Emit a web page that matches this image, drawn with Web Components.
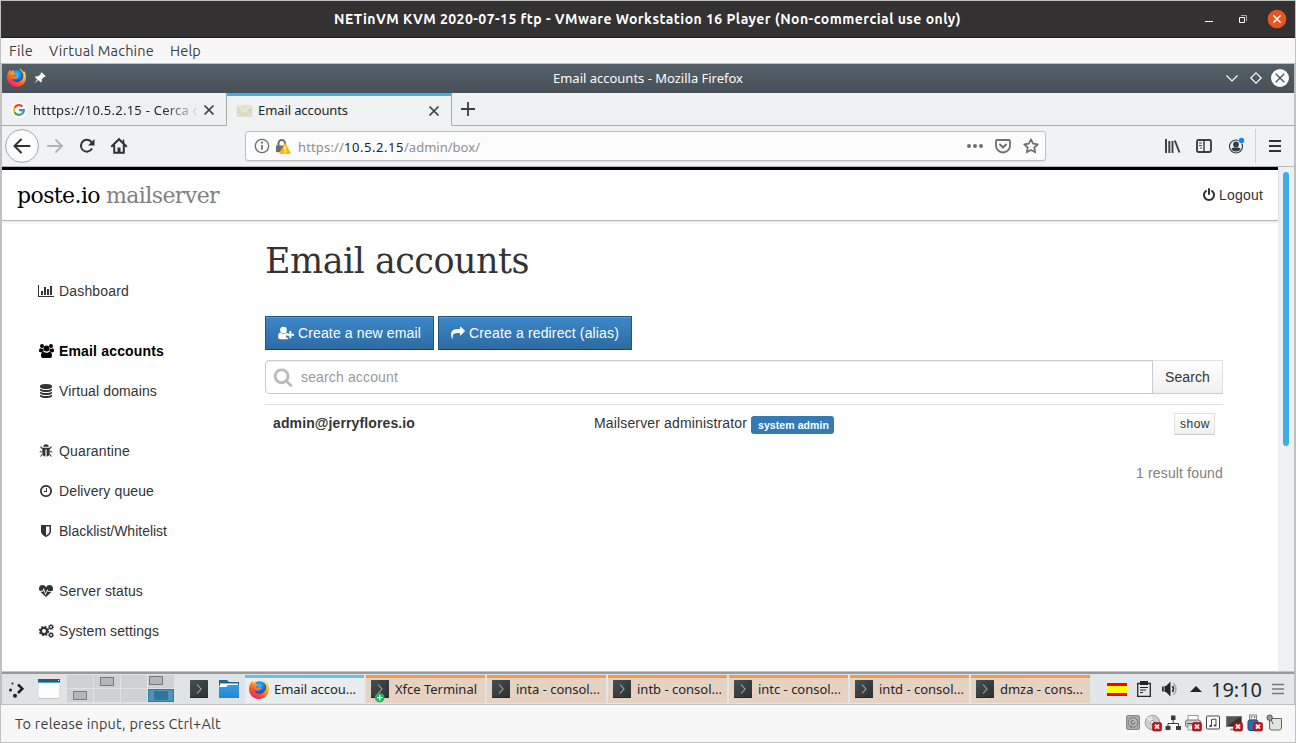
<!DOCTYPE html>
<html lang="en">
<head>
<meta charset="utf-8">
<title>VMware Workstation Player</title>
<style>
html,body{margin:0;padding:0;width:1296px;height:743px;overflow:hidden;background:#c0c0c0}
</style>
</head>
<body>
<vm-window></vm-window>
<script>
const TERM = '<defs><linearGradient id="t" x2="1" y2="1"><stop offset="0" stop-color="#474f50"/><stop offset="1" stop-color="#2b3033"/></linearGradient></defs><rect width="18" height="18" rx=".5" fill="url(#t)"/><path d="M0 17.5h18" stroke="#22282a"/><path d="M7 4.500l4 4.500-4 4.500" fill="none" stroke="#a5a8a8" stroke-width="1.100"/>';
const FOX = '<defs><linearGradient id="f" x1=".85" y1="0" x2=".2" y2="1"><stop offset="0" stop-color="#fff44f"/><stop offset=".35" stop-color="#ffb021"/><stop offset=".65" stop-color="#ff5a22"/><stop offset="1" stop-color="#e31587"/></linearGradient><radialGradient id="g" cx=".5" cy=".3"><stop offset="0" stop-color="#26c9ff"/><stop offset="1" stop-color="#1b4bc4"/></radialGradient></defs><circle cx="10.500" cy="9.500" r="7.300" fill="url(#g)"/><path d="M13.500 0c-.3 2.400 3 3.300 3.600 6.200.7 3.800-1.200 6.900-4.400 8.200-3.600 1.300-7-.8-7.300-3.400 1.500 1.200 3.200 1 4.300.2 1-.7 1.900-.6 2.200-1.100.4-.7-.5-1.500-1.700-1.400-1.300.2-2 .6-3-.1-.7-.6-.5-1.200-.3-1.700.6-.2 1.700.1 2-.7.1-.5-1.500-1.100-1.900-2-.1-.6.2-1.500.8-2-1.600.1-2.700.8-3.400 1.700-.7-.2-1-1.300-1-2.200C1.600 3.300 0 6.500 0 10c0 5.700 4.500 10 10 10s10-4.400 10-10c0-3-.9-5.500-2.200-7.100.1.800-.1 1.200-.3 1.600C16.700 2.700 14.500 1.700 13.500 0z" fill="url(#f)"/>';
const BADX = '<rect x="8.500" y="8.500" width="9" height="8.500" rx="1.500" fill="#c3141c" stroke="#8e0a10" stroke-width=".6"/><path d="M11 10.700l4 4m0-4l-4 4" stroke="#fff" stroke-width="1.900"/>';
/* name: [viewBox, markup] */
const ICONS = {
min:['0 0 12 12','<path d="M2 8.500h8" stroke="#fff"/>'],
restore:['0 0 12 12','<path d="M2.500 4.500h5v5h-5z" fill="none" stroke="#fff"/><path d="M4 2.500h5.500V8" fill="none" stroke="#aaa" stroke-width="1"/>'],
closeo:['0 0 20 20','<circle cx="10" cy="10" r="9.300" fill="#e95420"/><path d="M6.300 6.300l7.400 7.400m0-7.400l-7.400 7.400" stroke="#fff" stroke-width="1.500"/>'],
fox:['0 0 20 20',FOX],
pin:['0 0 12 12','<path d="M7.700.3L11.700 4.300l-1 .8-.7-.2-2.200 2.300.1 2.300-1.100.9-2.500-2.500L.3 11.700 3.300 7.300.900 5.200l1-1 2.300.1L6.800 2.100 6.600 1.400z" fill="#fcfcfc"/>'],
down:['0 0 14 10','<path d="M1.500 2.500L7 8l5.500-5.500" fill="none" stroke="#fcfcfc" stroke-width="1.200"/>'],
diamond:['0 0 14 14','<path d="M7 1.800L12.200 7 7 12.200 1.800 7z" fill="none" stroke="#fcfcfc" stroke-width="1.200"/>'],
closew:['0 0 18 18','<circle cx="9" cy="9" r="9" fill="#fcfcfc"/><path d="M4.700 4.700l8.600 8.600m0-8.600l-8.600 8.600" stroke="#475057" stroke-width="1.300"/>'],
google:['0 0 48 48','<circle cx="24" cy="24" r="24" fill="#fff"/><g fill="none" stroke-width="6.500"><path d="M10.700 17.500A14.700 14.700 0 0 1 34.500 13.800" stroke="#ea4335"/><path d="M10.700 17.500a14.700 14.700 0 0 0 0 13" stroke="#fbbc05"/><path d="M10.700 30.500A14.700 14.700 0 0 0 33.300 35.300" stroke="#34a853"/><path d="M24 24.500h14.700A14.700 14.700 0 0 1 33.300 35.300" stroke="#4285f4"/></g>'],
x:['0 0 12 12','<path d="M1.500 1.500l9 9m0-9l-9 9" stroke="#3b3e40" stroke-width="1.700"/>'],
env:['0 0 16 12','<rect x=".3" y=".3" width="15.400" height="11.400" fill="#dbd9c0"/><path d="M.3.300L8 7 15.700.3" fill="#e4e3cd" stroke="#f6f5ea" stroke-width=".8"/><path d="M.3 11.700L6 5.500m9.700 6.200L10 5.500" stroke="#f3f2e4" stroke-width=".7"/>'],
plus:['0 0 14 14','<path d="M7 0v14M0 7h14" stroke="#3b3e40" stroke-width="1.800"/>'],
back:['0 0 34 34','<circle cx="17" cy="17" r="16.400" fill="#fcfcfc" stroke="#a5a6a7"/><path d="M9.500 17h15M16 10.500L9.500 17l6.500 6.500" fill="none" stroke="#2f3133" stroke-width="2" stroke-linecap="round"/>'],
fwd:['0 0 16 14','<path d="M.8 7h14M9 1l6 6-6 6" fill="none" stroke="#b0b2b3" stroke-width="1.900" stroke-linecap="round"/>'],
reload:['0 0 16 16','<path d="M13 10.600A5.900 5.900 0 1 1 13.300 5.500" fill="none" stroke="#2f3133" stroke-width="2"/><path d="M15.500 1v6.500H9z" fill="#2f3133"/>'],
home:['0 0 16 16','<path d="M.8 8.300L8 1.200l7.200 7.100" fill="none" stroke="#2f3133" stroke-width="2" stroke-linecap="round"/><path d="M3.200 7v7.800h9.600V7" fill="none" stroke="#2f3133" stroke-width="2"/><path d="M6.500 14.500V9.500h3v5z" fill="#2f3133"/><path d="M12.500 1.500v4" stroke="#2f3133" stroke-width="1.500"/>'],
info:['0 0 16 16','<circle cx="8" cy="8" r="6.700" fill="none" stroke="#6c6e70" stroke-width="1.300"/><path d="M8 7v4.700" stroke="#6c6e70" stroke-width="1.700"/><circle cx="8" cy="4.700" r="1.100" fill="#6c6e70"/>'],
lock:['0 0 16 16','<path d="M3.500 8V5.300a3.300 3.300 0 0 1 6.600 0V8" fill="none" stroke="#6c6e70" stroke-width="2"/><path d="M1 7.500h9.500v6.700H1z" fill="#6c6e70"/><path d="M10 5.500l5.300 9.800H4.700z" fill="#ffbf00" stroke="#ffb000"/><path d="M10 8.300v3.700M10 13v1.400" stroke="#fff" stroke-width="1.500"/>'],
dots:['0 0 16 6','<g fill="#6c6e70"><circle cx="2" cy="3" r="2"/><circle cx="8" cy="3" r="2"/><circle cx="14" cy="3" r="2"/></g>'],
pocket:['0 0 16 16','<path d="M2 2h12q1 0 1 1v4.500a7 7 0 0 1-14 0V3q0-1 1-1z" fill="none" stroke="#6c6e70" stroke-width="1.800"/><path d="M5 6.500l3 3 3-3" fill="none" stroke="#6c6e70" stroke-width="1.900" stroke-linecap="round" stroke-linejoin="round"/>'],
star:['0 0 16 16','<path d="M8 1.400l2.100 4.300 4.700.6-3.500 3.200.9 4.800L8 12l-4.200 2.300.9-4.800L1.200 6.300l4.700-.6z" fill="none" stroke="#6c6e70" stroke-width="1.700" stroke-linejoin="round"/>'],
lib:['0 0 16 16','<path d="M2 1v14M5.300 3v12M8.500 3v12M10.800 2.500L15.500 14.500" stroke="#3b3e40" stroke-width="1.900"/>'],
side:['0 0 16 16','<rect x="1" y="2" width="14" height="12" rx="1.500" fill="none" stroke="#3b3e40" stroke-width="1.900"/><path d="M8 2v12" stroke="#3b3e40" stroke-width="1.500"/><path d="M3 5h3M3 7.500h3M4 10h2" stroke="#3b3e40"/>'],
acct:['0 0 18 18','<circle cx="8" cy="9.500" r="6.500" fill="none" stroke="#3b3e40" stroke-width="1.200"/><circle cx="8" cy="7.500" r="2.900" fill="#3b3e40"/><path d="M3.200 12.300q.5-1.800 2.800-1.800h4q2.300 0 2.800 1.800A6 6 0 0 1 8 14.500a6 6 0 0 1-4.800-2.200z" fill="#3b3e40"/><circle cx="13.500" cy="3.500" r="3.200" fill="#f1f2f3"/><circle cx="13.500" cy="3.500" r="2.700" fill="#0a84ff"/>'],
burger:['0 0 12 12','<path d="M0 1h12M0 6h12M0 11h12" stroke="#2f3133" stroke-width="2"/>'],
power:['0 0 1792 1792','<path d="M1664 896q0 156-61 298t-164 245-245 164-298 61-298-61-245-164-164-245-61-298q0-182 80.500-343t226.500-270q43-32 95.500-25t83.500 50q32 42 24.500 94.500t-49.500 84.500q-98 74-151.500 181t-53.500 228q0 104 40.500 198.500t109.500 163.500 163.500 109.500 198.500 40.500 198.500-40.500 163.500-109.500 109.500-163.500 40.500-198.500q0-121-53.500-228t-151.500-181q-42-32-49.500-84.500t24.500-94.500q31-43 84-50t95 25q146 109 226.500 270t80.500 343zm-640-768v640q0 52-38 90t-90 38-90-38-38-90v-640q0-52 38-90t90-38 90 38 38 90z"/>'],
search:['0 0 1792 1792','<path fill="#bbb" d="M1216 832q0-185-131.500-316.500t-316.500-131.500-316.500 131.500-131.500 316.500 131.500 316.500 316.500 131.500 316.500-131.500 131.500-316.500zm512 832q0 52-38 90t-90 38q-54 0-90-38l-343-342q-179 124-399 124-143 0-273.500-55.500t-225-150-150-225-55.500-273.500 55.500-273.500 150-225 225-150 273.500-55.500 273.500 55.500 225 150 150 225 55.500 273.500q0 220-124 399l343 343q37 37 37 90z"/>'],
share:['0 0 1792 1792','<path d="M1792 640q0 26-19 45l-512 512q-19 19-45 19t-45-19-19-45v-256h-224q-98 0-175.500 6t-154 21.500-133 42.500-105.500 69.500-80 101-48.500 138.500-17.500 181q0 55 5 123 0 6 2.500 23.500t2.500 26.500q0 15-8.500 25t-23.500 10q-16 0-28-17-7-9-13-22t-13.500-30-10.500-24q-127-285-127-451 0-199 53-333 162-403 875-403h224v-256q0-26 19-45t45-19 45 19l512 512q19 19 19 45z"/>'],
chart:['0 0 2048 1792','<path d="M640 896v512h-256v-512h256zm384-512v1024h-256v-1024h256zm1024 1152v128h-2048v-1536h128v1408h1920zm-640-896v768h-256v-768h256zm384-384v1152h-256v-1152h256z"/>'],
db:['0 0 1792 1792','<path d="M896 768q237 0 443-43t325-127v170q0 69-103 128t-280 93.500-385 34.500-385-34.500-280-93.500-103-128v-170q119 84 325 127t443 43zm0 768q237 0 443-43t325-127v170q0 69-103 128t-280 93.500-385 34.500-385-34.500-280-93.500-103-128v-170q119 84 325 127t443 43zm0-384q237 0 443-43t325-127v170q0 69-103 128t-280 93.500-385 34.500-385-34.500-280-93.500-103-128v-170q119 84 325 127t443 43zm0-1152q208 0 385 34.500t280 93.500 103 128v128q0 69-103 128t-280 93.500-385 34.500-385-34.500-280-93.500-103-128v-128q0-69 103-128t280-93.500 385-34.500z"/>'],
clock:['0 0 1792 1792','<path d="M1024 544v448q0 14-9 23t-23 9h-320q-14 0-23-9t-9-23v-64q0-14 9-23t23-9h224v-352q0-14 9-23t23-9h64q14 0 23 9t9 23zm416 352q0-148-73-273t-198-198-273-73-273 73-198 198-73 273 73 273 198 198 273 73 273-73 198-198 73-273zm224 0q0 209-103 385.500t-279.500 279.500-385.500 103-385.500-103-279.500-279.500-103-385.500 103-385.500 279.500-279.500 385.500-103 385.500 103 279.500 279.500 103 385.500z"/>'],
shield:['0 0 1792 1792','<path d="M1344 960v-640h-448v1137q119-63 213-137 235-184 235-360zm192-768v768q0 86-33.500 170.500t-83 150-118 127.500-126.500 103-121 77.500-89.500 49.500-42.500 20q-12 6-26 6t-26-6q-16-7-42.500-20t-89.500-49.500-121-77.500-126.500-103-118-127.500-83-150-33.500-170.500v-768q0-26 19-45t45-19h1152q26 0 45 19t19 45z"/>'],
users:['0 0 15 14','<circle cx="3" cy="2" r="2"/><circle cx="12" cy="2" r="2"/><circle cx="7.500" cy="4.500" r="2.900"/><path d="M4.300 4.600Q4 6.500 5 7.300 3.600 7.300 3 8.300H1.500Q0 8.300 0 6.900 0 4.200 1.300 4.200q1.700 1 3 .4zm6.400 0q.3 1.900-.7 2.700 1.400 0 2 1h1.500q1.500 0 1.500-1.400 0-2.700-1.300-2.700-1.700 1-3 .4zM2 12q0-4.200 2.700-4.200 1 1 2.800 1t2.800-1Q13 7.800 13 12q0 2-2 2H4q-2 0-2-2z"/>'],
bug:['0 0 14 14','<path d="M4.300 2.800a2.700 2.500 0 0 1 5.400 0z"/><path d="M3.400 3.700h7.200v5.200q0 3.400-3 3.700V5.500H6.400v7.100q-3-.3-3-3.700z"/><path d="M3.700 5L1.500 2.700M10.300 5l2.200-2.300M3.500 7.800H.7M10.500 7.800h2.800M3.700 10l-2.200 2.500M10.300 10l2.200 2.500" stroke="currentColor" stroke-width="1.100"/>'],
heart:['0 0 14 14','<path d="M7 3.300Q5.800 1 3.600 1 0 1.200 0 4.700q0 1 .5 2h3.100L4.700 4l2 5.200L8.300 5.200 9.300 7h4.200q.5-1 .5-2.300Q14 1.200 10.400 1 8.200 1 7 3.300zM1.300 7.700L7 13l5.700-5.200H8.800l-.5-.8-1.700 4.300L4.700 6.300l-.5 1.400z"/>'],
cogs:['0 0 15 14','<circle cx="5" cy="7" r="3.100" fill="none" stroke="currentColor" stroke-width="2.300"/><circle cx="5" cy="7" r="4.500" fill="none" stroke="currentColor" stroke-width="1.500" stroke-dasharray="1.770 1.770"/><g fill="none" stroke="currentColor"><circle cx="12" cy="3" r="1.600" stroke-width="1.300"/><circle cx="12" cy="3" r="2.400" stroke-width=".9" stroke-dasharray="1.250 .63"/><circle cx="12" cy="11" r="1.600" stroke-width="1.300"/><circle cx="12" cy="11" r="2.400" stroke-width=".9" stroke-dasharray="1.250 .63"/></g>'],
uplus:['0 0 16 14','<circle cx="5.500" cy="4" r="3.300"/><path d="M0 11q0-4.500 2.500-4.500 1.300 1.200 3 1.200t3-1.200q.7 0 1 .4v2.200H8.200v2.600h1.900v1q-.6.500-1.600.5h-6Q0 13.200 0 11z"/><path d="M12.300 5v7.300M8.700 8.700H16" stroke="currentColor" stroke-width="2" fill="none"/>'],
launch:['0 0 18 18','<path d="M10 4.500l4.300 4.200L10 13" fill="none" stroke="#1d2125" stroke-width="2.500"/><circle cx="4.500" cy="3.500" r="1" fill="#1d2125"/><circle cx="2.500" cy="10" r="1.500" fill="#1d2125"/><circle cx="7" cy="15.800" r="2" fill="#1d2125"/>'],
win:['0 0 22 20','<rect y=".5" width="22" height="19.500" fill="#c6c9cb"/><rect x=".5" y="4" width="21" height="15" fill="#fdfdfd"/><rect width="22" height="3.500" fill="#475057"/><rect y="3" width="22" height="1" fill="#3daee9"/><rect x="20" y="1" width="1" height="1" fill="#fff"/>'],
term:['0 0 18 18',TERM],
termp:['0 0 18 23',TERM+'<circle cx="8.700" cy="17.700" r="4.800" fill="#27ae60"/><path d="M8.700 15v5.400M6 17.700h5.400" stroke="#fff" stroke-width="1.300"/>'],
folder:['0 0 20 18','<defs><linearGradient id="b" x2="0" y2="1"><stop offset="0" stop-color="#3a9de2"/><stop offset="1" stop-color="#1c86d8"/></linearGradient></defs><path d="M0 0h8l2 2h10v4H0z" fill="#22648f"/><rect x="1" y="3.500" width="18" height="6" fill="#fff"/><path d="M0 7h7l2-2h11v13H0z" fill="url(#b)"/>'],
flag:['0 0 20 13','<rect width="20" height="13" fill="#f00"/><rect y="3" width="20" height="7" fill="#ff0"/>'],
clip:['0 0 16 16','<path d="M1.700 2.500h12.600v12.800H1.700z" fill="none" stroke="#232629" stroke-width="1.300"/><path d="M4 0h8v4H4z" fill="#232629"/><path d="M4 6.500h8M4 9h6M4 11.500h3" stroke="#232629" stroke-width="1"/>'],
vol:['0 0 18 16','<path d="M1 5.500h1.700v5H1zM3.500 5H5L9.500.5v15L5 11H3.500z" fill="#232629"/><path d="M11.500 5q2 3 0 6" fill="none" stroke="#232629" stroke-width="1.500"/><path d="M12.500 2q5 6 0 12" fill="none" stroke="#a5a8aa" stroke-width="1.500"/>'],
up:['0 0 12 6','<path d="M0 6l6-6 6 6z" fill="#232629"/>'],
menu:['0 0 12 12','<path d="M0 1.500h12M0 6h12M0 10.500h12" stroke="#76797c" stroke-width="1.500"/>'],
hdd:['0 0 18 18','<rect x="2.500" y="1.500" width="13" height="14" rx="1.500" fill="#aaa" stroke="#888"/><circle cx="9" cy="8.500" r="4.700" fill="#bbb" stroke="#777"/><path d="M10.800 8a1.900 1.900 0 1 1-1.300-1.400M6 13l2-1" fill="none" stroke="#666"/>'],
cd:['0 0 18 18','<circle cx="8.500" cy="8.500" r="7.300" fill="#cdcdcd" stroke="#8a8a8a" stroke-width=".8"/><path d="M8.500 8.500L3 3.500M8.500 8.500L6 1.800" stroke="#f0f0f0" stroke-width="1.500"/><circle cx="8.500" cy="8.500" r="2" fill="#fff" stroke="#999"/>'+BADX],
net:['0 0 18 18','<g fill="#3c3c3c"><rect x="7" y="1.500" width="4.500" height="4.500"/><rect x="1.500" y="12" width="5" height="4"/><rect x="12" y="12" width="5" height="4"/></g><path d="M9.200 6v3.500M4 12V9.500h10.500V12" fill="none" stroke="#3c3c3c"/>'],
print:['0 0 18 18','<rect x="4" y="1.500" width="10" height="5" fill="#fff" stroke="#999"/><rect x="1.500" y="6" width="15" height="7" rx="2" fill="#ccc" stroke="#777"/><path d="M3 9.500h12" stroke="#555"/><rect x="4" y="11" width="8" height="5" fill="#eee" stroke="#888" stroke-width=".7"/>'+BADX],
snd:['0 0 18 18','<rect x="2.500" y="2" width="13" height="13" rx="1" fill="#fff" stroke="#444"/><path d="M7.500 12V5.500L12 5v6.500" fill="none" stroke="#444"/><ellipse cx="6.600" cy="12" rx="1.400" ry="1"/><ellipse cx="11" cy="11.500" rx="1.400" ry="1"/>'],
disp:['0 0 18 18','<rect x="1.500" y="2.500" width="15" height="10" fill="#333" stroke="#777"/><path d="M2 12L15 3H2z" fill="#555"/><path d="M5 15.500h8" stroke="#888" stroke-width="1.500"/>'+BADX],
usb:['0 0 18 18','<rect x="4.500" y="1" width="7" height="5" fill="#eee" stroke="#888"/><rect x="3" y="6" width="10" height="10.500" rx="2" fill="#2f6cae" stroke="#1c4a80"/><path d="M6 3h1.300M9 3h1.300" stroke="#555" stroke-width="1.500"/>'+BADX],
note:['0 0 18 18','<path d="M4.500 4.500h12v10l-2 1.500h-8l-2-1z" fill="#e4e4dc" stroke="#555" stroke-width=".9"/><path d="M6 5.500l2 4.500" stroke="#555"/><circle cx="4.700" cy="3.700" r="2.700" fill="#999" stroke="#555"/>']
};

class UiIcon extends HTMLElement{
  connectedCallback(){
    if(this.shadowRoot)return;
    const [vb,body]=ICONS[this.getAttribute('name')];
    const w=this.getAttribute('w')||16,h=this.getAttribute('h')||w;
    this.attachShadow({mode:'open'}).innerHTML=`<style>:host{display:block;flex:none;width:${w}px;height:${h}px}svg{display:block;overflow:visible;fill:currentColor}</style><svg width="${w}" height="${h}" viewBox="${vb}">${body}</svg>`;
  }
}
customElements.define('ui-icon',UiIcon);

/* Single-line label whose tracking is adjusted to the width in its "w" attribute. */
class UiLabel extends HTMLElement{
  connectedCallback(){
    if(this.shadowRoot)return;
    this.attachShadow({mode:'open'}).innerHTML='<style>:host{display:block;flex:none;white-space:nowrap}span{display:inline-block;white-space:pre}</style><span><slot></slot></span>';
    const w=+this.getAttribute('w'),s=this.shadowRoot.querySelector('span');
    if(w){
      const n=this.textContent.length,now=s.getBoundingClientRect().width;
      s.style.letterSpacing=((w-now)/n)+'px';
      this.style.width=w+'px';
    }
  }
}
customElements.define('ui-label',UiLabel);

function define(name,css,html){
  const t=document.createElement('template');
  t.innerHTML=`<style>*{box-sizing:border-box}${css}</style>${html}`;
  customElements.define(name,class extends HTMLElement{
    constructor(){super();this.attachShadow({mode:'open'}).append(t.content.cloneNode(true));}
  });
}

define('vm-titlebar',`:host{display:flex;height:37px;margin:0 1px;background:#333132;border-bottom:1px solid #1f1d1e;align-items:center;color:#fff;font:700 14px "Ubuntu","Noto Sans",sans-serif;padding-left:333px}
.b{display:flex;align-items:center;margin-left:242px;gap:22px}.b ui-icon:last-child{margin-left:-4px}`,
`<ui-label w="627">NETinVM KVM 2020-07-15 ftp - VMware Workstation 16 Player (Non-commercial use only)</ui-label>
<div class="b"><ui-icon name="min" w="12"></ui-icon><ui-icon name="restore" w="12"></ui-icon><ui-icon name="closeo" w="20"></ui-icon></div>`);

define('vm-menubar',`:host{display:flex;height:25px;margin:0 1px;background:#f7f7f7;align-items:center;gap:16px;padding:0 0 0 8px;color:#3d3d3d;font:14.500px "Ubuntu","Noto Sans",sans-serif}`,
`<ui-label w="24">File</ui-label><ui-label w="105">Virtual Machine</ui-label><ui-label w="31">Help</ui-label>`);

define('kde-titlebar',`:host{display:flex;height:29px;align-items:center;background:linear-gradient(#566068,#475057);color:#fcfcfc;font:13px "Noto Sans",sans-serif;padding:0 0 2px 5px;box-sizing:border-box}
.p{margin-left:8px}.t{margin-left:507px}.d{margin-left:482px}.m{margin-left:10px}.c{margin-left:8px}`,
`<ui-icon name="fox" w="19"></ui-icon><ui-icon class="p" name="pin" w="12"></ui-icon><ui-label class="t" w="190">Email accounts - Mozilla Firefox</ui-label>
<ui-icon class="d" name="down" w="14" h="10"></ui-icon><ui-icon class="m" name="diamond" w="14"></ui-icon><ui-icon class="c" name="closew" w="18"></ui-icon>`);

define('ff-tab',`:host{display:flex;align-items:center;width:225px;height:33px;border-right:1px solid #a9abad;border-bottom:1px solid #a9abad;padding:2px 11px 0 9px;gap:6px;box-sizing:border-box}
:host([active]){border-bottom-color:transparent;border-top:3px solid #3daee9;background:#f1f2f3;padding-top:0;gap:5px}
.l{flex:1;overflow:hidden;height:24px;display:flex;align-items:center;padding-bottom:1px}
:host([fade]) .l{-webkit-mask-image:linear-gradient(90deg,#000 130px,transparent 168px)}`,
`<slot name="icon"></slot><div class="l"><slot></slot></div><ui-icon name="x" w="12"></ui-icon>`);

define('ff-tabs',`:host{display:flex;height:33px;background:#eff0f1;color:#232629;font:13px "Noto Sans",sans-serif}
.r{flex:1;border-bottom:1px solid #a9abad;padding:9px 0 0 9px}`,
`<ff-tab fade><ui-icon slot="icon" name="google" w="16"></ui-icon><ui-label w="168">htttps://10.5.2.15 - Cerca d</ui-label></ff-tab>
<ff-tab active><ui-icon slot="icon" name="env" w="17" h="12"></ui-icon><ui-label w="90">Email accounts</ui-label></ff-tab>
<div class="r"><ui-icon name="plus" w="14"></ui-icon></div>`);

define('ff-urlbar',`:host{display:flex;align-items:center;width:801px;height:30px;background:#fcfcfc;border:1px solid #bcbebf;border-radius:3px;padding:0 6px 0 8px;box-shadow:0 1px 1px #0001;color:#8e8f90;font:13px "Noto Sans",sans-serif;box-sizing:border-box}
b{font-weight:400;color:#232629}.k{margin:0 7px 0 5px}.u{display:flex;padding-top:2px;flex:1}.g{display:flex;gap:12px;align-items:center}`,
`<ui-icon name="info" w="16"></ui-icon><ui-icon class="k" name="lock" w="16"></ui-icon>
<div class="u"><ui-label w="46">https://</ui-label><ui-label w="60"><b>10.5.2.15</b></ui-label><ui-label w="76">/admin/box/</ui-label></div>
<div class="g"><ui-icon name="dots" w="16" h="6"></ui-icon><ui-icon name="pocket" w="16"></ui-icon><ui-icon name="star" w="16"></ui-icon></div>`);

define('ff-toolbar',`:host{display:flex;height:41px;align-items:center;background:#f1f2f3;border-bottom:1px solid #b9bbbd;padding-left:3px;box-sizing:border-box}
.n{display:flex;align-items:center;width:240px}.n :nth-child(2){margin-left:8px}.n :nth-child(3){margin-left:16px}.n :nth-child(4){margin-left:16px}
.r{display:flex;align-items:center;gap:16px;margin-left:118px}.s{width:1px;height:34px;background:#d0d2d3;margin-left:-7px}.r ui-icon:last-child{margin-left:-3px}`,
`<div class="n"><ui-icon name="back" w="34"></ui-icon><ui-icon name="fwd" w="16" h="14"></ui-icon><ui-icon name="reload" w="16"></ui-icon><ui-icon name="home" w="16"></ui-icon></div>
<ff-urlbar></ff-urlbar>
<div class="r"><ui-icon name="lib" w="16"></ui-icon><ui-icon name="side" w="16"></ui-icon><ui-icon name="acct" w="18"></ui-icon><div class="s"></div><ui-icon name="burger" w="12"></ui-icon></div>`);

define('poste-header',`:host{display:flex;height:54px;border-top:3px solid #000;border-bottom:1px solid #b9b9b9;box-shadow:0 1px 3px #0002;padding:0 15px 0 15px;align-items:center;background:#fff;box-sizing:border-box}
.b{display:flex;gap:6px;font:22px "Roboto Slab","DejaVu Serif",serif;color:#000;flex:1;padding-top:1px}.g{color:#808080}
.o{display:flex;gap:3px;align-items:center;font:14px "Liberation Sans",Arial,sans-serif;color:#333}`,
`<div class="b"><ui-label w="83">poste.io</ui-label><ui-label class="g" w="113">mailserver</ui-label></div><div class="o"><ui-icon name="power" w="14"></ui-icon><ui-label w="44">Logout</ui-label></div>`);

define('poste-link',`:host{display:flex;height:40px;align-items:center;color:#333}:host([gap]){margin-top:20px}:host([active]){color:#000;font-weight:700}
.i{width:16px;display:flex;justify-content:center;margin-right:5px}`,
`<div class="i"><slot name="icon"></slot></div><slot></slot>`);

define('poste-nav',`:host{display:block;width:263px;padding:50px 0 0 36px;font:14px "Liberation Sans",Arial,sans-serif;box-sizing:border-box}`,
`<poste-link><ui-icon slot="icon" name="chart" w="16" h="14"></ui-icon><ui-label w="70">Dashboard</ui-label></poste-link>
<poste-link gap active><ui-icon slot="icon" name="users" w="15" h="14"></ui-icon><ui-label w="105">Email accounts</ui-label></poste-link>
<poste-link><ui-icon slot="icon" name="db" w="14"></ui-icon><ui-label w="98">Virtual domains</ui-label></poste-link>
<poste-link gap><ui-icon slot="icon" name="bug" w="14"></ui-icon><ui-label w="71">Quarantine</ui-label></poste-link>
<poste-link><ui-icon slot="icon" name="clock" w="14"></ui-icon><ui-label w="95">Delivery queue</ui-label></poste-link>
<poste-link><ui-icon slot="icon" name="shield" w="14"></ui-icon><ui-label w="108">Blacklist/Whitelist</ui-label></poste-link>
<poste-link gap><ui-icon slot="icon" name="heart" w="14"></ui-icon><ui-label w="84">Server status</ui-label></poste-link>
<poste-link><ui-icon slot="icon" name="cogs" w="15" h="14"></ui-icon><ui-label w="100">System settings</ui-label></poste-link>`);

define('poste-button',`:host{display:flex;align-items:center;height:34px;gap:4px;padding:0 12px;color:#fff;border:1px solid #245580;border-bottom-color:#1c4468;background:linear-gradient(#3c87ca,#2d6ca2);box-shadow:inset 0 1px 0 #ffffff26;box-sizing:border-box}`,
`<slot></slot>`);

define('poste-main',`:host{display:block;width:958px;padding-top:18px;color:#333;font:14px "Liberation Sans",Arial,sans-serif;box-sizing:border-box}
h1{margin:0;height:44px;display:flex;align-items:center;font:400 35px "Roboto Slab","DejaVu Serif",serif}
.a{display:flex;gap:4px;margin-top:33px}
.s{display:flex;margin-top:10px;height:34px}
.f{flex:1;border:1px solid #ccc;border-radius:4px 0 0 4px;box-shadow:inset 0 1px 1px #00000013;display:flex;align-items:center;padding-left:7px;gap:8px;color:#999}
.sb{width:71px;border:1px solid #e0e0e0;border-left:1px solid #ccc;border-bottom-color:#ccc;margin-left:-1px;background:linear-gradient(#fff,#f0f0f0);display:flex;align-items:center;padding-left:12px}
.r{display:flex;margin-top:10px;border-top:1px solid #ddd;padding:8px 8px 0;height:50px;align-items:flex-start}
.e{width:321px;font-weight:700;line-height:20px}.n{width:153px;line-height:20px}
.bd{margin:3px 0 0 4px;width:83px;height:18px;border-radius:3px;background:#337ab7;color:#fff;font-size:10.500px;font-weight:700;display:flex;align-items:center;padding:0 0 1px 7px}
.w{margin-left:auto;width:41px;height:22px;border:1px solid #e0e0e0;border-bottom-color:#ccc;background:linear-gradient(#fff,#f0f0f0);font-size:12px;display:flex;align-items:center;padding-left:5px}
.c{display:flex;justify-content:flex-end;color:#808080;margin-top:9px;line-height:20px}`,
`<h1><ui-label w="264">Email accounts</ui-label></h1>
<div class="a"><poste-button><ui-icon name="uplus" w="16" h="14"></ui-icon><ui-label w="123">Create a new email</ui-label></poste-button><poste-button><ui-icon name="share" w="14"></ui-icon><ui-label w="150">Create a redirect (alias)</ui-label></poste-button></div>
<div class="s"><div class="f"><ui-icon name="search" w="20"></ui-icon><ui-label w="97">search account</ui-label></div><div class="sb"><ui-label w="45">Search</ui-label></div></div>
<div class="r"><div class="e"><ui-label w="142">admin@jerryflores.io</ui-label></div><div class="n"><ui-label w="153">Mailserver administrator</ui-label></div><div class="bd"><ui-label w="71">system admin</ui-label></div><div class="w"><ui-label w="30">show</ui-label></div></div>
<div class="c"><ui-label w="87">1 result found</ui-label></div>`);

define('poste-page',`:host{display:flex;height:504px;background:#eff0f1}
.v{width:1276px;background:#fff}.b{display:flex}.t{flex:1;padding:5px 0 0 5px}.h{width:6px;height:274px;border-radius:3px;background:#3daee9}`,
`<div class="v"><poste-header></poste-header><div class="b"><poste-nav></poste-nav><poste-main></poste-main></div></div><div class="t"><div class="h"></div></div>`);

define('kde-task',`:host{display:flex;width:119px;height:28px;border-top:3px solid #f09a50;background:#e6d2c3;padding:2px 0 0 5px;gap:6px;box-sizing:border-box}
:host([active]){border-color:#69bdea;background:#e9edf0;padding:1px 0 0 4px;gap:5px}.l{display:flex;align-items:center;height:19px}:host([active]) .l{height:21px}`,
`<slot name="icon"></slot><div class="l"><slot></slot></div>`);

define('kde-pager',`:host{display:grid;grid-template-columns:repeat(4,26px);grid-template-rows:13px 13px;gap:1px;height:27px}
div{background:#cfd2d5;display:flex}i{width:14px;height:9px;border:1px solid #77797b;background:#b4b6b8;margin:2px 0 0 6px}.o i{margin:1px 0 0 1px}
.c{background:#4f94b8;border:1px solid #2c7ca5}.c i{border:0;width:14px;height:9px;margin:1px 0 0 5px;background:#2f7699}`,
`<div></div><div><i></i></div><div></div><div class="o"><i></i></div><div><i></i></div><div></div><div></div><div class="c"><i></i></div>`);

define('kde-panel',`:host{display:flex;height:33px;background:linear-gradient(90deg,#e0e3e6,#e4e7ea);border-top:1px solid #c4c4c4;box-shadow:inset 0 2px 0 #97999b;align-items:center;color:#232629;font:13px "Noto Sans",sans-serif;padding:2px 0 0 6px;box-sizing:border-box}
.t{display:flex;gap:2px;margin:-1px 0 0 6px}.s{display:flex;align-items:center;margin-left:17px}`,
`<ui-icon name="launch" w="18"></ui-icon><ui-icon name="win" w="22" h="20" style="margin-left:12px"></ui-icon><kde-pager style="margin:-1px 0 0 7px"></kde-pager>
<ui-icon name="term" w="18" style="margin-left:16px"></ui-icon><ui-icon name="folder" w="20" h="18" style="margin-left:11px"></ui-icon>
<div class="t"><kde-task active><ui-icon slot="icon" name="fox" w="20"></ui-icon><ui-label w="82">Email accou...</ui-label></kde-task>
<kde-task><ui-icon slot="icon" name="termp" w="18" h="23"></ui-icon><ui-label w="82">Xfce Terminal</ui-label></kde-task>
<kde-task><ui-icon slot="icon" name="term" w="18"></ui-icon><ui-label w="84">inta - consol...</ui-label></kde-task>
<kde-task><ui-icon slot="icon" name="term" w="18"></ui-icon><ui-label w="85">intb - consol...</ui-label></kde-task>
<kde-task><ui-icon slot="icon" name="term" w="18"></ui-icon><ui-label w="83">intc - consol...</ui-label></kde-task>
<kde-task><ui-icon slot="icon" name="term" w="18"></ui-icon><ui-label w="85">intd - consol...</ui-label></kde-task>
<kde-task><ui-icon slot="icon" name="term" w="18"></ui-icon><ui-label w="83">dmza - cons...</ui-label></kde-task></div>
<div class="s"><ui-icon name="flag" w="20" h="13"></ui-icon><ui-icon name="clip" w="16" style="margin-left:9px"></ui-icon><ui-icon name="vol" w="18" h="16" style="margin-left:9px"></ui-icon><ui-icon name="up" w="12" h="6" style="margin-left:11px"></ui-icon><ui-label w="51" style="font-size:20px;margin-left:9px">19:10</ui-label><ui-icon name="menu" w="12" style="margin-left:10px"></ui-icon></div>`);

define('vm-status',`:host{display:flex;height:37px;margin:0 1px;background:#f7f7f7;align-items:center;padding:0 12px 0 14px;color:#3d3d3d;font:14.500px "Ubuntu","Noto Sans",sans-serif;justify-content:space-between;box-sizing:border-box}
div{display:flex;gap:2.200px;margin-top:-1px}`,
`<ui-label w="206">To release input, press Ctrl+Alt</ui-label><div><ui-icon name="hdd" w="18"></ui-icon><ui-icon name="cd" w="18"></ui-icon><ui-icon name="net" w="18"></ui-icon><ui-icon name="print" w="18"></ui-icon><ui-icon name="snd" w="18"></ui-icon><ui-icon name="disp" w="18"></ui-icon><ui-icon name="usb" w="18"></ui-icon><ui-icon name="note" w="18"></ui-icon></div>`);

define('vm-window',`:host{display:flex;flex-direction:column;width:1296px;height:743px;padding-top:1px;background:#c0c0c0;box-sizing:border-box}
.g{margin:1px 2px 1px;width:1292px;overflow:hidden}`,
`<vm-titlebar></vm-titlebar><vm-menubar></vm-menubar><div class="g"><kde-titlebar></kde-titlebar><ff-tabs></ff-tabs><ff-toolbar></ff-toolbar><poste-page></poste-page><kde-panel></kde-panel></div><vm-status></vm-status>`);
</script>
</body>
</html>
